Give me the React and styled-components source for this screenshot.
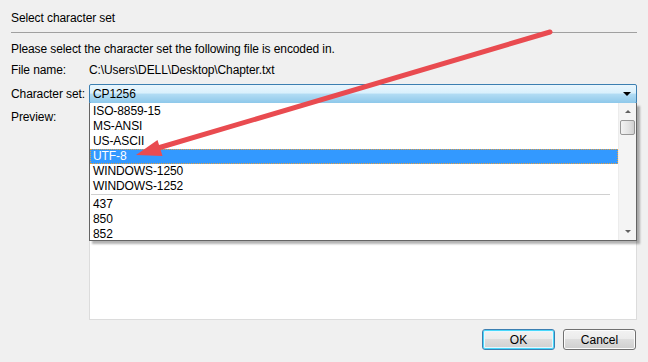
import React from "react";
import styled, { createGlobalStyle } from "styled-components";

const GlobalStyle = createGlobalStyle`
  html, body {
    margin: 0;
    padding: 0;
    background: #f0f0f0;
  }
  body {
    font-family: "Liberation Sans", Arial, sans-serif;
    font-size: 12px;
    letter-spacing: -0.1px;
    color: #000;
  }
`;

const Dialog = styled.div`
  position: relative;
  width: 648px;
  height: 362px;
  box-sizing: border-box;
  padding: 10px 11px 0 11px;
  background: #f0f0f0;
  overflow: hidden;
`;

const Title = styled.div`
  height: 16px;
  line-height: 16px;
`;

const Divider = styled.div`
  margin-top: 6px;
  border-top: 1px solid #a0a0a0;
`;

const Intro = styled.div`
  margin-top: 8px;
  height: 16px;
  line-height: 16px;
`;

const Form = styled.div`
  display: grid;
  grid-template-columns: 78px 1fr;
  align-items: start;
`;

const Label = styled.div`
  height: 16px;
  line-height: 16px;
  margin-top: ${(p) => p.$top || 0}px;
`;

const Value = styled.div`
  height: 16px;
  line-height: 16px;
  margin-top: ${(p) => p.$top || 0}px;
`;

const ComboWrap = styled.div`
  position: relative;
  margin-top: 6px;
  height: 20px;
`;

const Combo = styled.div`
  height: 20px;
  box-sizing: border-box;
  border: 1px solid #3c7fb1;
  border-radius: 2px;
  background: linear-gradient(
    to bottom,
    #eaf6fd 0%,
    #d9f0fc 45%,
    #b2dcf4 50%,
    #8ec8ea 100%
  );
  display: flex;
  align-items: center;
  padding-left: 3px;
`;

const ComboText = styled.span`
  flex: 1;
`;

const ComboArrow = styled.span`
  width: 0;
  height: 0;
  margin-right: 5px;
  border-left: 4px solid transparent;
  border-right: 4px solid transparent;
  border-top: 4px solid #000;
`;

const DropList = styled.div`
  position: absolute;
  top: 19px;
  left: 0;
  right: 0;
  height: 138px;
  box-sizing: border-box;
  border: 1px solid #646464;
  border-top: none;
  background: #fff;
  box-shadow: 3px 3px 2px rgba(0, 0, 0, 0.3);
  display: flex;
  z-index: 2;
`;

const Options = styled.div`
  flex: 1;
  padding-top: 1px;
`;

const Option = styled.div`
  height: 15px;
  line-height: 15px;
  padding-left: 3px;
  box-sizing: border-box;
  background: ${(p) => (p.$selected ? "#3399ff" : "transparent")};
  color: ${(p) => (p.$selected ? "#fff" : "#000")};
  outline: ${(p) => (p.$selected ? "1px dotted #e8a040" : "none")};
  outline-offset: -1px;
`;

const OptionSeparator = styled.div`
  height: 2px;
  margin: 0 8px 0 1px;
  border-top: 1px solid #d0d0d0;
`;

const Scrollbar = styled.div`
  width: 17px;
  background: #f4f4f4;
  border-left: 1px solid #ececec;
  display: flex;
  flex-direction: column;
  align-items: center;
`;

const ScrollArrow = styled.div`
  height: 17px;
  display: flex;
  align-items: center;
  justify-content: center;
  &::after {
    content: "";
    width: 0;
    height: 0;
    border-left: 3px solid transparent;
    border-right: 3px solid transparent;
    ${(p) =>
      p.$down
        ? "border-top: 3px solid #606060;"
        : "border-bottom: 3px solid #606060;"}
  }
`;

const ScrollTrack = styled.div`
  flex: 1;
  width: 100%;
  display: flex;
  flex-direction: column;
  align-items: center;
`;

const ScrollThumb = styled.div`
  width: 15px;
  height: 15px;
  box-sizing: border-box;
  border: 1px solid #979797;
  border-radius: 2px;
  background: linear-gradient(to right, #f3f3f3, #e2e2e2 60%, #d0d0d0);
`;

const PreviewBox = styled.div`
  margin-top: 5px;
  height: 211px;
  box-sizing: border-box;
  border: 1px solid #dcdcdc;
  background: #fff;
`;

const Buttons = styled.div`
  display: flex;
  justify-content: flex-end;
  gap: 8px;
  margin-top: 9px;
  padding-right: 1px;
`;

const Button = styled.button`
  width: 73px;
  height: 21px;
  box-sizing: border-box;
  border: 1px solid ${(p) => (p.$default ? "#3c7fb1" : "#707070")};
  border-radius: 3px;
  font-family: "Liberation Sans", Arial, sans-serif;
  font-size: 12px;
  color: #000;
  padding: 0;
  background: linear-gradient(
    to bottom,
    #f2f2f2 0%,
    #ebebeb 49%,
    #dddddd 50%,
    #cfcfcf 100%
  );
  box-shadow: ${(p) =>
    p.$default
      ? "inset 0 0 0 1px #48d8fb, inset 0 0 0 2px #e8f6fd"
      : "inset 0 0 0 1px #fcfcfc"};
`;

const ArrowOverlay = styled.svg`
  position: absolute;
  left: 0;
  top: 0;
  width: 648px;
  height: 362px;
  pointer-events: none;
  z-index: 5;
`;

const charsets = [
  "ISO-8859-15",
  "MS-ANSI",
  "US-ASCII",
  "UTF-8",
  "WINDOWS-1250",
  "WINDOWS-1252",
];
const codepages = ["437", "850", "852"];

export default function App() {
  return (
    <>
      <GlobalStyle />
      <Dialog>
        <Title>Select character set</Title>
        <Divider />
        <Intro>Please select the character set the following file is encoded in.</Intro>
        <Form>
          <Label $top={5}>File name:</Label>
          <Value $top={5}>C:\Users\DELL\Desktop\Chapter.txt</Value>
          <Label $top={8}>Character set:</Label>
          <ComboWrap>
            <Combo>
              <ComboText>CP1256</ComboText>
              <ComboArrow />
            </Combo>
            <DropList>
              <Options>
                {charsets.map((c) => (
                  <Option key={c} $selected={c === "UTF-8"}>
                    {c}
                  </Option>
                ))}
                <OptionSeparator />
                {codepages.map((c) => (
                  <Option key={c}>{c}</Option>
                ))}
              </Options>
              <Scrollbar>
                <ScrollArrow />
                <ScrollTrack>
                  <ScrollThumb />
                </ScrollTrack>
                <ScrollArrow $down />
              </Scrollbar>
            </DropList>
          </ComboWrap>
          <Label $top={5}>Preview:</Label>
          <PreviewBox />
        </Form>
        <Buttons>
          <Button $default>OK</Button>
          <Button>Cancel</Button>
        </Buttons>
        <ArrowOverlay viewBox="0 0 648 362">
          <line
            x1="550"
            y1="32"
            x2="158"
            y2="148"
            stroke="#e94b50"
            strokeWidth="5"
            strokeLinecap="round"
          />
          <polygon points="136,155 157.5,140 162.5,156" fill="#e94b50" />
        </ArrowOverlay>
      </Dialog>
    </>
  );
}
